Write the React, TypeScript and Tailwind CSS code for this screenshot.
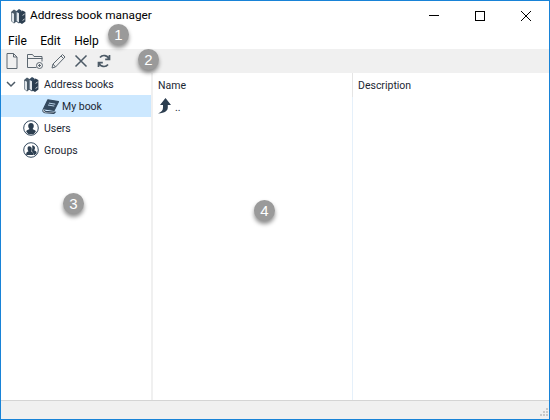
import React from 'react';

const font = "font-['Roboto','Noto_Sans',sans-serif]";

const BooksIcon = ({ className }: { className?: string }) => (
  <svg viewBox="0 0 16 16" className={className}>
    <path d="M1 4 4 1.500 6.500 3v10.500L4 15.500 1 13z" fill="#4a5a68" />
    <path d="M1.600 4.600 4 5.800v9L1.600 13z" fill="#dfe5ea" />
    <path d="M6 3.500 9 1l2.500 1.500V13L9 15.500 6 13.500z" fill="#34495e" />
    <path d="M6.600 4 9 5.300v9.200L6.600 13z" fill="#dfe5ea" />
    <path d="M9 5.200 12.500 2.500 15.400 4v9.500l-3.400 2.400-3-1.600z" fill="#2c3e50" />
    <path d="M12.600 7.400l2-1.400M12.600 12.400l2-1.400" stroke="#fff" strokeWidth="0.8" />
  </svg>
);

const BookIcon = () => (
  <svg viewBox="0 0 16 14" className="w-[17px] h-[15px]">
    <path d="M5.500.6 15.600 2.400 11.400 10.800 1.400 9.200z" fill="#34495e" stroke="#34495e" strokeWidth="1" strokeLinejoin="round" />
    <path d="M1.300 9.400C.3 11 .8 12.600 2.600 12.900l8.600.7 1.200-1.200-9-.8c-1.200-.2-1.200-1.500-.4-1.900" fill="#fff" stroke="#34495e" strokeWidth="1" />
    <path d="M6.500 3.800l6 1M5.600 5.600l6 1" stroke="#cfe8ff" strokeWidth="0.8" />
  </svg>
);

const UserCircle = ({ group }: { group?: boolean }) => (
  <svg viewBox="0 0 16 16" className="w-4 h-4">
    <circle cx="8" cy="8" r="7.300" fill="#fff" stroke="#34495e" strokeWidth="1" />
    {group ? (
      <>
        <path d="M9 3.600c1.600-.6 3 .6 3 2.300 0 1-.4 1.800-.9 2.300 1.600.5 2.600 1.400 2.600 3l-2 1.800h-1.200c0-2-1-3.400-2-4 .9-1.400 1.200-3.600.5-5.400z" fill="#2c3e50" />
        <path d="M6.200 4.200c1.600 0 2.600 1.200 2.600 2.800 0 1-.4 1.800-.9 2.300 1.400.4 2.300 1.400 2.300 2.600v1H3.200v-1c0-1.200.9-2.200 2.300-2.600-.5-.5-.9-1.300-.9-2.300 0-1.600 0-2.800 1.600-2.800z" fill="#2c3e50" />
      </>
    ) : (
      <path d="M8 3c1.700 0 2.800 1.300 2.800 3 0 1-.4 1.900-1 2.500v.8c1.600.5 3 1.200 3 2.400l-2.300 2.600h-5l-2.300-2.600c0-1.200 1.400-1.900 3-2.400v-.8c-.6-.6-1-1.500-1-2.500C5.200 4.300 6.300 3 8 3z" fill="#2c3e50" />
    )}
  </svg>
);

const Badge = ({ n, className }: { n: number; className: string }) => (
  <div className={`absolute w-[21px] h-[21px] rounded-full bg-[#9a9a9a] text-white text-[15px] leading-[21px] text-center shadow-[0_3px_4px_rgba(0,0,0,0.45)] font-['Liberation_Sans',sans-serif] ${className}`}>
    {n}
  </div>
);

const ToolIcon = ({ children }: { children: React.ReactNode }) => (
  <svg viewBox="0 0 18 18" fill="none" stroke="#5c6770" strokeWidth="1" className="w-[18px] h-[18px]">
    {children}
  </svg>
);

export default function App() {
  return (
    <div className={`relative w-[550px] h-[420px] flex flex-col bg-white border border-[#1883d7] overflow-hidden text-[10.5px] text-[#1b2733] ${font}`}>
      {/* title bar */}
      <div className="h-[29px] flex items-center shrink-0">
        <BooksIcon className="w-4 h-4 ml-[9px] mr-[4px]" />
        <span className="mt-[1px] text-[11.8px] text-black">Address book manager</span>
        <div className="ml-auto flex items-center">
          <div className="w-[46px] flex justify-center"><div className="w-[10px] h-px bg-black" /></div>
          <div className="w-[46px] flex justify-center"><div className="w-[10px] h-[10px] border border-black" /></div>
          <div className="w-[46px] flex justify-center">
            <svg viewBox="0 0 10 10" className="w-[10px] h-[10px]" stroke="#000" strokeWidth="1"><path d="M0 0l10 10M10 0 0 10" /></svg>
          </div>
        </div>
      </div>

      {/* menu */}
      <div className="h-[19px] flex items-center shrink-0 pl-[7px] pt-[3px] gap-[13.5px] text-[12px] text-black">
        <span>File</span>
        <span>Edit</span>
        <span>Help</span>
      </div>

      {/* toolbar */}
      <div className="h-[24px] flex items-center shrink-0 bg-[#f0f0f0] pl-[2px] gap-[5px]">
        <ToolIcon>
          <path d="M4 1.500h6.500l3.500 3.500v11.500H4zM10.500 1.500V5H14" />
        </ToolIcon>
        <ToolIcon>
          <path d="M10.500 15.500H1.500V2.500h5l1.500 2h8v5M1.500 6.500h15" />
          <circle cx="13.500" cy="13.500" r="3" />
          <path d="M13.500 12v3M12 13.500h3" />
        </ToolIcon>
        <ToolIcon>
          <path d="M3 16l1-4L13.500 2.500l2.500 2.500L6.500 15zM4 12l2.500 3M12 4l2.500 2.500" />
        </ToolIcon>
        <ToolIcon>
          <path d="M3.500 3.500l11 11M14.500 3.500l-11 11" strokeWidth="1.500" stroke="#4c5a66" />
        </ToolIcon>
        <ToolIcon>
          <path d="M14 7A5.200 5.200 0 0 0 5 5.500M4 11A5.200 5.200 0 0 0 13 12.500M14.500 3v4.300h-4.300M3.500 15v-4.300h4.300" strokeWidth="1.700" stroke="#4c5a66" />
        </ToolIcon>
      </div>

      <div className="flex-1 flex min-h-0">
        {/* tree */}
        <div className="w-[150px] shrink-0">
          <div className="h-[22px] flex items-center">
            <svg viewBox="0 0 10 10" className="w-[10px] h-[10px] ml-[5px] mr-[7px]" fill="none" stroke="#4c5a66" strokeWidth="1.500"><path d="M1 3l4 4 4-4" /></svg>
            <BooksIcon className="w-4 h-4 mr-[5px]" />
            <span className="mt-[1px]">Address books</span>
          </div>
          <div className="h-[22px] flex items-center bg-[#cce8ff] pl-[41px]">
            <BookIcon />
            <span className="ml-[3px] mt-[1px]">My book</span>
          </div>
          <div className="h-[22px] flex items-center pl-[22px]">
            <UserCircle />
            <span className="ml-[5px] mt-[1px]">Users</span>
          </div>
          <div className="h-[22px] flex items-center pl-[22px]">
            <UserCircle group />
            <span className="ml-[5px] mt-[1px]">Groups</span>
          </div>
        </div>

        <div className="w-[2px] shrink-0 bg-[#f0f0f0]" />

        {/* list */}
        <div className="flex-1 flex min-w-0">
          <div className="w-[200px] shrink-0 border-r border-[#e5f0fa]">
            <div className="h-[24px] pl-[5px] pt-[1px] flex items-center border-r border-[#e5e5e5] -mr-px">Name</div>
            <div className="h-[18px] pl-[3px] flex items-center">
              <svg viewBox="0 0 16 16" className="w-4 h-4" fill="#2c3e50"><path d="M9.500 0 15 7h-3.200v2.500c0 3-2.500 5.500-9.800 6 3.500-1.500 5-3.200 5-6V7H4z" /></svg>
              <span className="ml-[3px] mt-[3px]">..</span>
            </div>
          </div>
          <div className="flex-1">
            <div className="h-[24px] pl-[5px] pt-[1px] flex items-center">Description</div>
          </div>
        </div>
      </div>

      {/* status bar */}
      <div className="relative h-[19px] shrink-0 bg-[#f0f0f0] border-t border-[#d4d4d4]">
        <svg viewBox="0 0 12 12" className="absolute right-0 bottom-0 w-[12px] h-[12px]" fill="#c8c8c8">
          <rect x="9" y="1" width="2" height="2" /><rect x="6" y="4" width="2" height="2" /><rect x="9" y="4" width="2" height="2" />
          <rect x="3" y="7" width="2" height="2" /><rect x="6" y="7" width="2" height="2" /><rect x="9" y="7" width="2" height="2" />
        </svg>
      </div>

      <Badge n={1} className="left-[107px] top-[23px]" />
      <Badge n={2} className="left-[137px] top-[48px]" />
      <Badge n={3} className="left-[62px] top-[192px]" />
      <Badge n={4} className="left-[253px] top-[199px]" />
    </div>
  );
}
